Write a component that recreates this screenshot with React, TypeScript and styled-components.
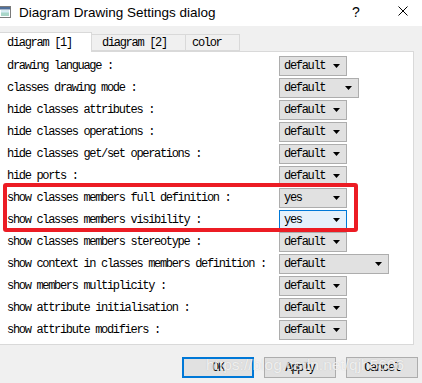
import React from "react";
import styled, { createGlobalStyle } from "styled-components";

const GlobalStyle = createGlobalStyle`
  html, body { margin: 0; padding: 0; background: #f0f0f0; overflow: hidden; }
  #root { width: 422px; height: 383px; }
`;

const mono = `"Liberation Mono", "DejaVu Sans Mono", monospace`;

const Window = styled.div`
  position: relative;
  width: 422px;
  height: 383px;
  background: #f0f0f0;
  display: flex;
  flex-direction: column;
  overflow: hidden;
`;

const TitleBar = styled.div`
  height: 26px;
  background: #ffffff;
  display: flex;
  align-items: center;
  flex-shrink: 0;
`;

const AppIcon = styled.svg`
  margin-left: -1px;
  margin-top: -2px;
  flex-shrink: 0;
`;

const Title = styled.div`
  margin-left: 8px;
  margin-top: -2px;
  font-family: "Liberation Sans", Arial, sans-serif;
  font-size: 13.5px;
  color: #000;
  flex: 1;
`;

const Help = styled.div`
  font-family: "Liberation Sans", Arial, sans-serif;
  font-size: 14px;
  color: #000;
  margin-top: -3px;
  width: 10px;
`;

const CloseIcon = styled.svg`
  margin-left: 36px;
  margin-right: 14px;
  margin-top: -4px;
`;

const Body = styled.div`
  padding-top: 6px;
  display: flex;
  flex-direction: column;
`;

const TabBar = styled.div`
  display: flex;
  align-items: flex-end;
  height: 19px;
  position: relative;
  z-index: 1;
`;

const Tab = styled.div<{ $active?: boolean; $w: number; $pad: number }>`
  box-sizing: border-box;
  width: ${(p) => p.$w}px;
  height: ${(p) => (p.$active ? 20 : 17)}px;
  margin-bottom: ${(p) => (p.$active ? -1 : 0)}px;
  padding-left: ${(p) => p.$pad}px;
  background: ${(p) => (p.$active ? "#ffffff" : "#f0f0f0")};
  border: 1px solid #d9d9d9;
  border-left: none;
  border-bottom: ${(p) => (p.$active ? "none" : "1px solid #d9d9d9")};
  font-family: ${mono};
  font-size: 12px;
  letter-spacing: -1.3px;
  color: #000;
  line-height: ${(p) => (p.$active ? 20 : 16)}px;
  white-space: nowrap;
`;

const Panel = styled.div`
  box-sizing: border-box;
  height: 294px;
  margin-right: 8px;
  background: #ffffff;
  border: 1px solid #d9d9d9;
  border-left: none;
  padding-top: 4px;
  display: flex;
  flex-direction: column;
`;

const Row = styled.div`
  display: grid;
  grid-template-columns: 279px auto;
  height: 22px;
  align-items: start;
`;

const Label = styled.div`
  padding-left: 7px;
  line-height: 20px;
  font-family: ${mono};
  font-size: 12px;
  letter-spacing: -1.32px;
  color: #000;
  white-space: nowrap;
  overflow: hidden;
`;

const Combo = styled.div<{ $w: number; $focus?: boolean }>`
  box-sizing: border-box;
  width: ${(p) => p.$w}px;
  height: 20px;
  background: ${(p) => (p.$focus ? "#e5f1fb" : "#e1e1e1")};
  border: 1px solid ${(p) => (p.$focus ? "#0078d7" : "#adadad")};
  display: flex;
  align-items: center;
  padding-left: 4px;
  padding-right: 6px;
`;

const ComboText = styled.span`
  flex: 1;
  font-family: ${mono};
  font-size: 12px;
  letter-spacing: -1.32px;
  color: #000;
  line-height: 18px;
`;

const Arrow = styled.svg`
  flex-shrink: 0;
`;

const Footer = styled.div`
  display: flex;
  justify-content: flex-end;
  gap: 10px;
  padding-top: 12px;
  padding-right: 4px;
`;

const Button = styled.div<{ $default?: boolean }>`
  box-sizing: border-box;
  width: 72px;
  height: 21px;
  background: #e1e1e1;
  border: 1px solid ${(p) => (p.$default ? "#0078d7" : "#adadad")};
  box-shadow: ${(p) => (p.$default ? "inset 0 0 0 1px #0078d7" : "none")};
  display: flex;
  align-items: center;
  justify-content: center;
  font-family: ${mono};
  font-size: 12px;
  letter-spacing: -1.3px;
  color: #000;
`;

const Highlight = styled.div`
  position: absolute;
  left: 3px;
  top: 183px;
  width: 355px;
  height: 49px;
  box-sizing: border-box;
  border: 4.5px solid #ec1c24;
  border-radius: 3px;
  pointer-events: none;
`;

const Watermark = styled.div`
  position: absolute;
  left: 206px;
  top: 356px;
  font-family: "Liberation Sans", Arial, sans-serif;
  font-size: 15.5px;
  color: rgba(255, 255, 255, 0.75);
  text-shadow: 0 0 1px rgba(120, 120, 120, 0.35);
  white-space: nowrap;
  pointer-events: none;
`;

type Item = { label: string; value: string; w: number; focus?: boolean };

const items: Item[] = [
  { label: "drawing language :", value: "default", w: 68 },
  { label: "classes drawing mode :", value: "default", w: 80 },
  { label: "hide classes attributes :", value: "default", w: 68 },
  { label: "hide classes operations :", value: "default", w: 68 },
  { label: "hide classes get/set operations :", value: "default", w: 68 },
  { label: "hide ports :", value: "default", w: 68 },
  { label: "show classes members full definition :", value: "yes", w: 68 },
  { label: "show classes members visibility :", value: "yes", w: 68, focus: true },
  { label: "show classes members stereotype :", value: "default", w: 68 },
  { label: "show context in classes members definition :", value: "default", w: 110 },
  { label: "show members multiplicity :", value: "default", w: 68 },
  { label: "show attribute initialisation :", value: "default", w: 68 },
  { label: "show attribute modifiers :", value: "default", w: 68 },
];

export default function App() {
  return (
    <>
      <GlobalStyle />
      <Window>
        <TitleBar>
          <AppIcon width="12" height="12" viewBox="0 0 12 12">
            <rect x="0.5" y="0.5" width="11" height="11" fill="#ffffff" stroke="#7a7a7a" />
            <rect x="1" y="1" width="10" height="2.5" fill="#4f6f9a" />
            <rect x="2" y="4.5" width="8" height="5.5" fill="#a9d6c8" />
            <rect x="2" y="4.5" width="8" height="2" fill="#d8ecf5" />
          </AppIcon>
          <Title>Diagram Drawing Settings dialog</Title>
          <Help>?</Help>
          <CloseIcon width="10" height="10" viewBox="0 0 10 10">
            <path d="M0.5 0.5 L9.5 9.5 M9.5 0.5 L0.5 9.5" stroke="#000" strokeWidth="1" />
          </CloseIcon>
        </TitleBar>
        <Body>
          <TabBar>
            <Tab $active $w={92} $pad={7}>diagram [1]</Tab>
            <Tab $w={94} $pad={10}>diagram [2]</Tab>
            <Tab $w={54} $pad={6}>color</Tab>
          </TabBar>
          <Panel>
            {items.map((it) => (
              <Row key={it.label}>
                <Label>{it.label}</Label>
                <Combo $w={it.w} $focus={it.focus}>
                  <ComboText>{it.value}</ComboText>
                  <Arrow width="7" height="4" viewBox="0 0 7 4">
                    <polygon points="0,0 7,0 3.5,4" fill="#000" />
                  </Arrow>
                </Combo>
              </Row>
            ))}
          </Panel>
          <Footer>
            <Button $default>OK</Button>
            <Button>Apply</Button>
            <Button>Cancel</Button>
          </Footer>
        </Body>
        <Highlight />
        <Watermark>https://blog.csdn.net/qjh5606</Watermark>
      </Window>
    </>
  );
}
